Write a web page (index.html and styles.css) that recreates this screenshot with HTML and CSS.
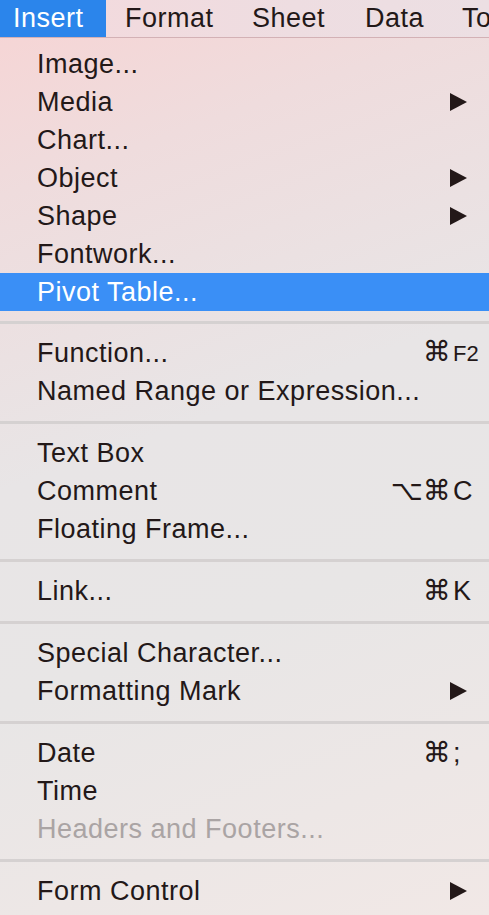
FILE: index.html
```html
<!DOCTYPE html>
<html lang="en">
<head>
<meta charset="utf-8">
<title>Insert menu</title>
<link rel="stylesheet" href="styles.css">
</head>
<body>
<div class="screen">
  <div class="menubar">
    <span class="mb-item mb-insert active">Insert</span>
    <span class="mb-item mb-format">Format</span>
    <span class="mb-item mb-sheet">Sheet</span>
    <span class="mb-item mb-data">Data</span>
    <span class="mb-item mb-tools">Tools</span>
  </div>
  <div class="menu">
    <div class="item"><span class="label">Image...</span></div>
    <div class="item"><span class="label">Media</span><span class="arrow"></span></div>
    <div class="item"><span class="label">Chart...</span></div>
    <div class="item"><span class="label">Object</span><span class="arrow"></span></div>
    <div class="item"><span class="label">Shape</span><span class="arrow"></span></div>
    <div class="item"><span class="label">Fontwork...</span></div>
    <div class="item selected"><span class="label">Pivot Table...</span></div>
    <div class="sep sep-first"></div>
    <div class="item"><span class="label">Function...</span><span class="shortcut"><span class="mods">⌘</span><span class="key key-small">F2</span></span></div>
    <div class="item"><span class="label">Named Range or Expression...</span></div>
    <div class="sep"></div>
    <div class="item"><span class="label">Text Box</span></div>
    <div class="item"><span class="label">Comment</span><span class="shortcut"><span class="mods">⌥⌘</span><span class="key">C</span></span></div>
    <div class="item"><span class="label">Floating Frame...</span></div>
    <div class="sep"></div>
    <div class="item"><span class="label">Link...</span><span class="shortcut"><span class="mods">⌘</span><span class="key">K</span></span></div>
    <div class="sep"></div>
    <div class="item"><span class="label">Special Character...</span></div>
    <div class="item"><span class="label">Formatting Mark</span><span class="arrow"></span></div>
    <div class="sep"></div>
    <div class="item"><span class="label">Date</span><span class="shortcut"><span class="mods">⌘</span><span class="key">;</span></span></div>
    <div class="item"><span class="label">Time</span></div>
    <div class="item disabled"><span class="label">Headers and Footers...</span></div>
    <div class="sep"></div>
    <div class="item"><span class="label">Form Control</span><span class="arrow"></span></div>
  </div>
</div>
</body>
</html>
```

FILE: styles.css
```css
* { box-sizing: border-box; }

html, body {
  margin: 0;
  padding: 0;
  width: 489px;
  height: 915px;
  overflow: hidden;
}

body {
  font-family: "Liberation Sans", Arial, sans-serif;
  color: #231818;
}

.screen {
  width: 489px;
  height: 915px;
  display: flex;
  flex-direction: column;
  background:
    linear-gradient(160deg, #f7d4d4 0%, #efdcdd 18%, #e8e5e6 45%, #e8e6e6 65%, #ede7e6 85%, #f1e8e6 100%);
}

.menubar {
  height: 38px;
  flex: none;
  display: flex;
  align-items: stretch;
  border-bottom: 1px solid #d3b1b5;
  background: linear-gradient(90deg, #f4d9dc 0%, #eedde1 60%, #ecdfe3 100%);
  white-space: nowrap;
  overflow: hidden;
}

.mb-item {
  flex: none;
  font-size: 27px;
  letter-spacing: 0.5px;
  line-height: 36px;
  padding-left: 19px;
  color: #231818;
}

.mb-insert { width: 106px; padding-left: 13px; }
.mb-format { width: 127px; }
.mb-sheet { width: 113px; }
.mb-data { width: 97px; }
.mb-tools { width: 46px; overflow: hidden; }

.mb-item.active {
  background: #2b85eb;
  color: #ffffff;
}

.menu {
  flex: 1;
  padding-top: 7px;
  display: flex;
  flex-direction: column;
}

.item {
  height: 38px;
  flex: none;
  display: flex;
  align-items: center;
  padding-left: 37px;
  padding-right: 10px;
  font-size: 27px;
  letter-spacing: 0.5px;
  white-space: nowrap;
}

.item .label {
  flex: 1;
  line-height: 38px;
}

.item.selected {
  background: #3a8ff6;
  color: #ffffff;
}

.item.disabled {
  color: #aaa4a4;
}

.sep {
  height: 24px;
  flex: none;
  display: flex;
  align-items: center;
}

.sep-first { height: 23px; }

.sep::before {
  content: "";
  display: block;
  width: 100%;
  height: 3px;
  background: #d5d1d1;
}

.arrow {
  width: 0;
  height: 0;
  margin-right: 12px;
  border-left: 17px solid #231818;
  border-top: 9.5px solid transparent;
  border-bottom: 9.5px solid transparent;
}

.shortcut {
  display: flex;
  align-items: baseline;
  line-height: 38px;
}

.mods {
  font-family: "DejaVu Sans", sans-serif;
  font-size: 28px;
  letter-spacing: 0;
  text-align: right;
  width: 90px;
}

.key {
  width: 28px;
  padding-left: 2px;
  font-size: 27px;
  letter-spacing: 0;
}

.key-small {
  font-size: 22px;
}
```
